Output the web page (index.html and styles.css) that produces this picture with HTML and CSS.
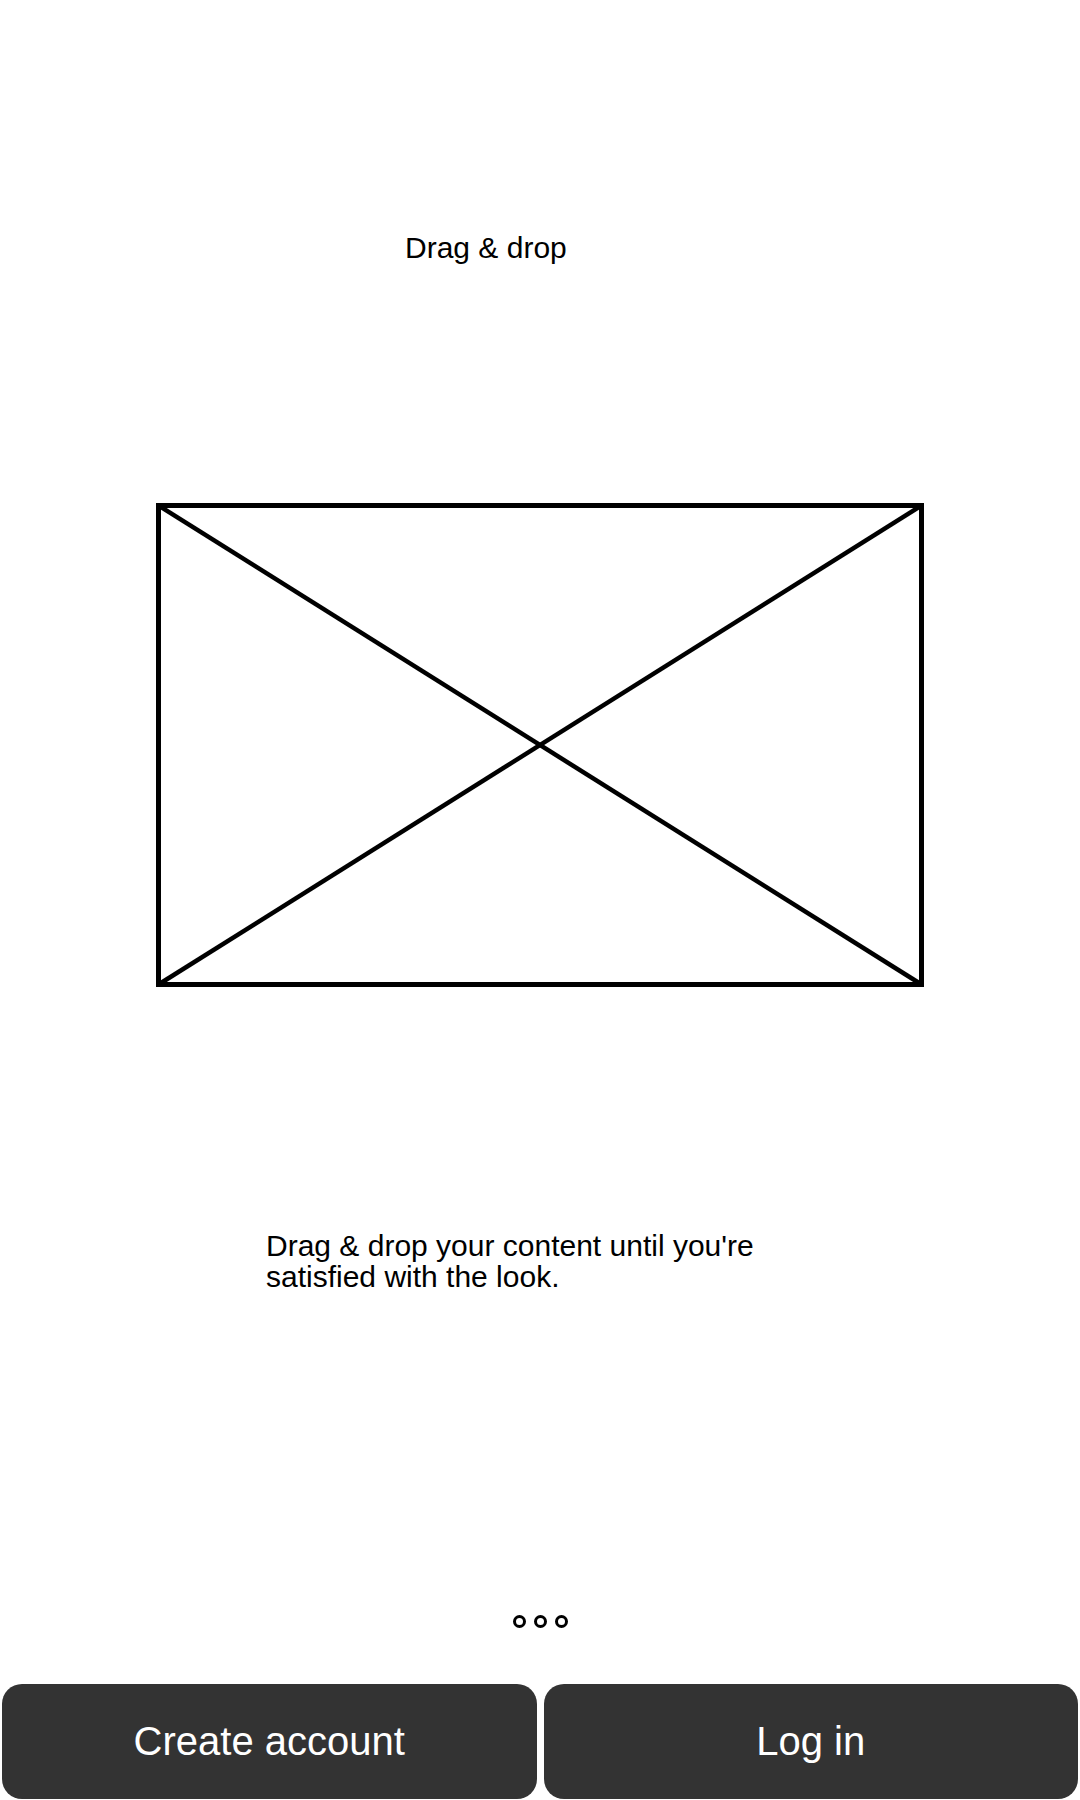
FILE: index.html
```html
<!DOCTYPE html>
<html lang="en">
<head>
<meta charset="utf-8">
<title>Drag &amp; drop</title>
<link rel="stylesheet" href="styles.css">
</head>
<body>
<div class="page">
  <div class="title">Drag &amp; drop</div>
  <svg class="placeholder" width="768" height="484" viewBox="0 0 768 484" aria-hidden="true">
    <rect x="2.5" y="2.5" width="763" height="479" fill="none" stroke="#000" stroke-width="5"/>
    <line x1="2.5" y1="2.5" x2="765.5" y2="481.5" stroke="#000" stroke-width="4.5"/>
    <line x1="765.5" y1="2.5" x2="2.5" y2="481.5" stroke="#000" stroke-width="4.5"/>
  </svg>
  <p class="desc">Drag &amp; drop your content until you're<br>satisfied with the look.</p>
  <div class="dots">
    <span class="dot"></span><span class="dot"></span><span class="dot"></span>
  </div>
  <div class="actions">
    <button class="btn">Create account</button>
    <button class="btn">Log in</button>
  </div>
</div>
</body>
</html>
```
FILE: styles.css
```css
html, body {
  margin: 0;
  padding: 0;
  background: #ffffff;
}
.page {
  width: 1080px;
  height: 1800px;
  display: flex;
  flex-direction: column;
  font-family: "Liberation Sans", Arial, sans-serif;
  color: #000;
  overflow: hidden;
}
.title {
  margin: 231px 0 0 405px;
  font-size: 30px;
  line-height: 34px;
}
.placeholder {
  display: block;
  margin: 238px 0 0 156px;
  flex: none;
}
.desc {
  margin: 243px 0 0 266px;
  font-size: 30px;
  line-height: 31px;
}
.dots {
  margin: 323px 0 0 0;
  display: flex;
  justify-content: center;
  gap: 8px;
}
.dot {
  width: 13px;
  height: 13px;
  box-sizing: border-box;
  border: 3px solid #000;
  border-radius: 50%;
}
.actions {
  margin-top: 56px;
  display: flex;
  gap: 7px;
  padding: 0 2px;
}
.btn {
  flex: 1;
  height: 115px;
  border: none;
  border-radius: 20px;
  background: #333333;
  color: #ffffff;
  font-family: "Liberation Sans", Arial, sans-serif;
  font-size: 40px;
  padding: 0;
}
```
